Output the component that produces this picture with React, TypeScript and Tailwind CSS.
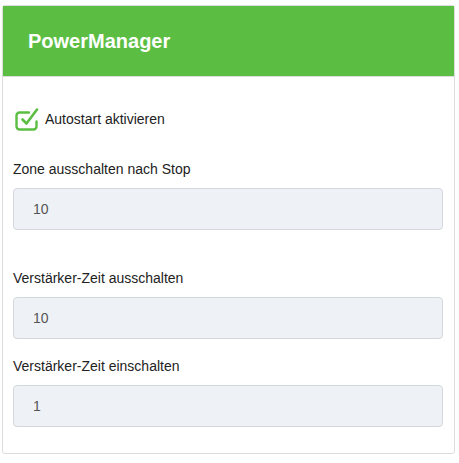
export default function App() {
  const fields = [
    { label: 'Zone ausschalten nach Stop', value: '10', gap: 'mt-[28px]' },
    { label: 'Verstärker-Zeit ausschalten', value: '10', gap: 'mt-[38px]' },
    { label: 'Verstärker-Zeit einschalten', value: '1', gap: 'mt-[17px]' }
  ];

  return (
    <div className="min-h-[463px] w-[459px] bg-white pt-[5px] pl-[2px] pr-[4px] font-['Liberation_Sans',Arial,sans-serif]">
      <div className="border border-[#dcdcdc] rounded-[3px] bg-white">
        {/* header */}
        <div className="h-[71px] bg-[#5bbe42] border-b border-[#dddddd] flex items-center pl-[25px]">
          <h1 className="text-[20px] font-bold text-white leading-none">PowerManager</h1>
        </div>

        <div className="pl-[10px] pr-[11px] pb-[26px]">
          <label className="mt-[30px] flex items-center h-[24px] gap-[4px]">
            <svg width="28" height="26" viewBox="0 0 28 26" className="shrink-0 -mt-[2px]">
              <path
                d="M16 7.5H6.5a3 3 0 0 0-3 3v11a3 3 0 0 0 3 3h14a3 3 0 0 0 3-3v-5"
                fill="none"
                stroke="#5bbe42"
                strokeWidth="2.4"
                strokeLinecap="round"
              />
              <path
                d="M9.5 14.5l4 4 10.5-14"
                fill="none"
                stroke="#5bbe42"
                strokeWidth="2.6"
                strokeLinecap="round"
                strokeLinejoin="round"
              />
            </svg>
            <span className="text-[14px] text-[#222]">Autostart aktivieren</span>
          </label>

          {fields.map((f, i) => (
            <div key={i} className={f.gap}>
              <div className="text-[14px] leading-[20px] text-[#222]">{f.label}</div>
              <div className="mt-[9px] h-[42px] rounded-[4px] border border-[#d4d8de] bg-[#eef1f5] flex items-center pl-[19px] text-[14px] text-[#555]">
                {f.value}
              </div>
            </div>
          ))}
        </div>
      </div>
    </div>
  );
}
